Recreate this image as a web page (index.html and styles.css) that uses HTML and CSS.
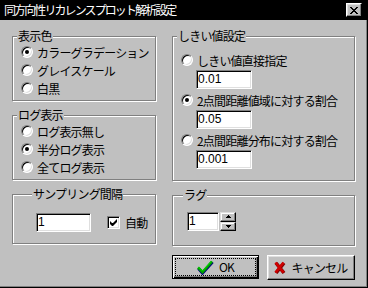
FILE: index.html
```html
<!DOCTYPE html>
<html lang="ja">
<head>
    <meta charset="UTF-8">
    <title>同方向性リカレンスプロット解析設定</title>
    <link rel="stylesheet" href="styles.css">
</head>
<body>
<div class="window">
    <div class="titlebar">
        <span class="title">同方向性リカレンスプロット解析設定</span>
        <span class="close">
            <svg width="8" height="7" viewBox="0 0 8 7"><path d="M0 0h2v1h1v1h2v-1h1v-1h2v1h-1v1h-1v1h-1v1h1v1h1v1h1v1h-2v-1h-1v-1h-2v1h-1v1h-2v-1h1v-1h1v-1h1v-1h-1v-1h-1v-1h-1z" fill="#000"/></svg>
        </span>
    </div>

    <div class="client">
        <div class="col col-left">
            <fieldset class="group g-color">
                <legend>表示色</legend>
                <div class="opt"><span class="radio on"></span>カラーグラデーション</div>
                <div class="opt"><span class="radio"></span>グレイスケール</div>
                <div class="opt"><span class="radio"></span>白黒</div>
            </fieldset>

            <fieldset class="group g-log">
                <legend>ログ表示</legend>
                <div class="opt"><span class="radio"></span>ログ表示無し</div>
                <div class="opt"><span class="radio on"></span>半分ログ表示</div>
                <div class="opt"><span class="radio"></span>全てログ表示</div>
            </fieldset>

            <fieldset class="group g-sample">
                <legend>サンプリング間隔</legend>
                <div class="sample-row">
                    <span class="edit edit-sample">1</span>
                    <span class="check-label"><span class="checkbox">
                        <svg width="9" height="9" viewBox="0 0 9 9"><path d="M1 3v3l2 2h1l4-4v-3l-4 4h-1z" fill="#000"/></svg>
                    </span>自動</span>
                </div>
            </fieldset>
        </div>

        <div class="col col-right">
            <fieldset class="group g-thresh">
                <legend>しきい値設定</legend>
                <div class="opt opt-thin"><span class="radio"></span>しきい値直接指定</div>
                <span class="edit edit-thresh">0.01</span>
                <div class="opt opt-thin"><span class="radio on"></span>2点間距離値域に対する割合</div>
                <span class="edit edit-thresh">0.05</span>
                <div class="opt opt-thin"><span class="radio"></span>2点間距離分布に対する割合</div>
                <span class="edit edit-thresh">0.001</span>
            </fieldset>

            <fieldset class="group g-lag">
                <legend>ラグ</legend>
                <div class="lag-row">
                    <span class="edit edit-lag">1</span>
                    <span class="spin">
                        <span class="spin-btn"><svg width="5" height="3" viewBox="0 0 5 3"><path d="M2 0h1v1h1v1h1v1h-5v-1h1v-1h1z" fill="#000"/></svg></span>
                        <span class="spin-btn"><svg width="5" height="3" viewBox="0 0 5 3"><path d="M0 0h5v1h-1v1h-1v1h-1v-1h-1v-1h-1z" fill="#000"/></svg></span>
                    </span>
                </div>
            </fieldset>

            <div class="buttons">
                <div class="btn btn-default">
                    <span class="face focus">
                        <svg class="ico" width="17" height="15" viewBox="0 0 17 15">
                            <path d="M1.5 8.5l4 4.5l10-11" fill="none" stroke="#000080" stroke-width="3.2"/>
                            <path d="M1 7.5l4.5 4.5l9.5-10.5" fill="none" stroke="#00a000" stroke-width="2.6"/>
                            <path d="M1.5 7l4 4l9-10" fill="none" stroke="#00e000" stroke-width="1"/>
                        </svg>
                        OK
                    </span>
                </div>
                <div class="btn">
                    <span class="face">
                        <svg class="ico" width="12" height="14" viewBox="0 0 12 14">
                            <path d="M2 2l8 10M10 2l-8 10" fill="none" stroke="#800000" stroke-width="3.6"/>
                            <path d="M1.5 1.5l8 10M9.5 1.5l-8 10" fill="none" stroke="#d00000" stroke-width="2.6"/>
                        </svg>
                        キャンセル
                    </span>
                </div>
            </div>
        </div>
    </div>
</div>
</body>
</html>
```

FILE: styles.css
```css
*{
    margin: 0;
    padding: 0;
    box-sizing: border-box;
}
body{
    width: 368px;
    height: 288px;
    background-color: #c0c0c0;
    font-family: "Noto Sans CJK JP", "Noto Sans", sans-serif;
    font-size: 12px;
    letter-spacing: -0.8px;
    color: #000;
}
.window{
    width: 368px;
    height: 288px;
    display: flex;
    flex-direction: column;
    background-color: #c0c0c0;
    border-right: 1px solid #000;
    border-bottom: 1px solid #000;
    box-shadow: inset -1px -1px 0 #808080;
}

/* title bar */
.titlebar{
    height: 20px;
    flex: none;
    display: flex;
    align-items: center;
    justify-content: space-between;
    padding: 0 5px 0 4px;
    background-color: #000;
    color: #fff;
}
.title{
    line-height: 14px;
    letter-spacing: -1.9px;
}
.close{
    width: 16px;
    height: 14px;
    display: flex;
    align-items: center;
    justify-content: center;
    background-color: #c0c0c0;
    border: 1px solid;
    border-color: #fff #000 #000 #fff;
    box-shadow: inset -1px -1px 0 #808080, inset 1px 1px 0 #dfdfdf;
}

/* client area */
.client{
    flex: 1;
    display: flex;
    gap: 16px;
    padding: 9px 0 0 12px;
}
.col{
    display: flex;
    flex-direction: column;
    gap: 7px;
}
.col-left{
    width: 144px;
}
.col-right{
    width: 183px;
}

/* group boxes */
.group{
    border: 1px solid #808080;
    box-shadow: inset 1px 1px 0 #fff, 1px 1px 0 #fff;
    padding: 0 8px 3px 8px;
    min-width: 0;
}
.group legend{
    margin-left: -4px;
    padding: 0 1px;
    line-height: 14px;
    background-color: #c0c0c0;
}

/* radio rows */
.opt{
    height: 18px;
    display: flex;
    align-items: center;
    gap: 4px;
    white-space: nowrap;
}
.opt-thin{
    height: 16px;
}
.radio{
    width: 12px;
    height: 12px;
    flex: none;
    border-radius: 50%;
    background-color: #fff;
    border: 1px solid;
    border-color: #808080 #fff #fff #808080;
    box-shadow: inset 1px 1px 0 #000, inset -1px -1px 0 #dfdfdf;
    display: flex;
    align-items: center;
    justify-content: center;
}
.radio.on::after{
    content: "";
    width: 4px;
    height: 4px;
    border-radius: 50%;
    background-color: #000;
}

/* edit boxes */
.edit{
    display: block;
    height: 19px;
    background-color: #fff;
    border: 1px solid;
    border-color: #808080 #fff #fff #808080;
    box-shadow: inset 1px 1px 0 #000, inset -1px -1px 0 #dfdfdf;
    font-family: "Liberation Sans", Arial, sans-serif;
    font-size: 12px;
    letter-spacing: 0;
    line-height: 17px;
    padding-left: 1px;
}
.edit-thresh{
    width: 56px;
    margin: 2px 0 3px 15px;
}
.edit-thresh:last-child{
    margin-bottom: 0;
}
.g-thresh{
    padding-top: 9px;
    padding-bottom: 11px;
}

.g-sample{
    padding: 12px 0 11px 23px;
}
.sample-row{
    display: flex;
    align-items: center;
}
.edit-sample{
    width: 55px;
}
.check-label{
    display: flex;
    align-items: center;
    gap: 5px;
    margin-left: 16px;
}
.checkbox{
    width: 13px;
    height: 13px;
    display: flex;
    align-items: center;
    justify-content: center;
    background-color: #fff;
    border: 1px solid;
    border-color: #808080 #fff #fff #808080;
    box-shadow: inset 1px 1px 0 #000, inset -1px -1px 0 #dfdfdf;
}

.g-lag{
    padding: 10px 0 14px 14px;
}
.lag-row{
    display: flex;
}
.edit-lag{
    width: 32px;
}
.spin{
    width: 16px;
    height: 19px;
    display: flex;
    flex-direction: column;
    margin-left: 1px;
}
.spin-btn{
    flex: 1;
    display: flex;
    align-items: center;
    justify-content: center;
    background-color: #c0c0c0;
    border: 1px solid;
    border-color: #dfdfdf #000 #000 #dfdfdf;
    box-shadow: inset -1px -1px 0 #808080, inset 1px 1px 0 #fff;
}

/* buttons */
.buttons{
    display: flex;
    gap: 8px;
    margin-top: 2px;
}
.btn{
    width: 89px;
    height: 25px;
    display: flex;
    padding: 2px;
    background-color: #c0c0c0;
    border: 1px solid;
    border-color: #fff #000 #000 #fff;
    box-shadow: inset -1px -1px 0 #808080, inset 1px 1px 0 #dfdfdf;
}
.btn-default{
    width: 88px;
    height: 24px;
    border-color: #000;
    box-shadow: inset 1px 1px 0 #fff, inset -1px -1px 0 #000, inset -2px -2px 0 #808080;
}
.face{
    flex: 1;
    display: flex;
    align-items: center;
    justify-content: center;
    gap: 5px;
    border: 1px dotted transparent;
    line-height: 14px;
}
.face.focus{
    border-color: #000;
}
.ico{
    flex: none;
}
```
